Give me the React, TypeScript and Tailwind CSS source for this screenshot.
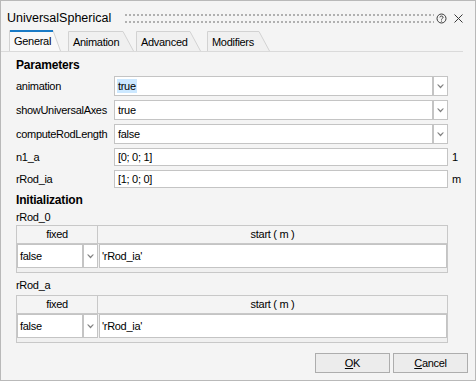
import React from 'react';

const Chevron = () => (
  <svg width="7" height="5" viewBox="0 0 7 5">
    <path d="M0 0.5 L3.5 4.5 L7 0.5 L5.5 0.5 L3.5 2.6 L1.5 0.5 Z" fill="#808080" />
  </svg>
);

interface TabProps {
  label: string;
  active?: boolean;
  width: number;
  className: string;
}

const Tab = ({ label, active, width, className }: TabProps) => {
  const h = active ? 21 : 20;
  const s = active ? 8 : 11;
  return (
    <div className={`relative ${className}`}>
      <svg className="absolute inset-0" width={width} height={h} viewBox={`0 0 ${width} ${h}`}>
        <path
          d={`M0.5 ${h} L0.5 0.5 L${width - s} 0.5 L${width - 0.5} ${h}`}
          fill={active ? '#f9f9f9' : '#f0f0f0'}
          stroke="#d2d2d2"
          strokeWidth="1"
        />
        {active && <rect x="1" y="0" width={width - s - 1} height="2" fill="#1a7bc6" />}
      </svg>
      <span className="relative block pl-[5px] pt-[4px] leading-[14px]">{label}</span>
    </div>
  );
};

const SelectRow = ({ label, value, selected }: { label: string; value: string; selected?: boolean }) => (
  <div className="flex h-[24px]">
    <div className="w-[98px] h-[20px] flex items-center">{label}</div>
    <div className="flex w-[334px] h-[20px]">
      <div className="flex-1 bg-white border border-[#c4c4c4] flex items-center pl-[2px]">
        <span className={selected ? 'bg-[#cce8ff] px-[1px] leading-[14px]' : 'px-[1px] leading-[14px]'}>{value}</span>
      </div>
      <div className="w-[15px] bg-white border border-[#c4c4c4] flex items-center justify-center">
        <Chevron />
      </div>
    </div>
  </div>
);

const TextRow = ({ label, value, unit }: { label: string; value: string; unit: string }) => (
  <div className="flex h-[22px]">
    <div className="w-[98px] h-[18px] flex items-center">{label}</div>
    <div className="w-[334px] h-[18px] bg-white border border-[#c4c4c4] flex items-center pl-[3px]">{value}</div>
    <div className="ml-[4px] h-[18px] flex items-center">{unit}</div>
  </div>
);

const InitTable = () => (
  <div className="w-[432px] border border-[#c8c8c8] bg-[#f0f0f0]">
    <div className="flex h-[18px] border-b border-[#c8c8c8] bg-[#f4f4f4]">
      <div className="w-[81px] flex items-center justify-center border-r border-[#c8c8c8]">fixed</div>
      <div className="flex-1 flex items-center justify-center">start ( m )</div>
    </div>
    <div className="flex h-[24px]">
      <div className="w-[66px] bg-white border border-[#c4c4c4] flex items-center pl-[2px]">false</div>
      <div className="w-[15px] bg-white border border-[#c4c4c4] flex items-center justify-center">
        <Chevron />
      </div>
      <div className="w-[348px] ml-[1px] bg-white border border-[#c4c4c4] flex items-center pl-[2px]">'rRod_ia'</div>
    </div>
    <div className="h-[4px]" />
  </div>
);

export default function App() {
  return (
    <div className="w-[476px] h-[381px] border border-[#b9b9b9] bg-[#f4f4f4] flex flex-col overflow-hidden text-black font-['Liberation_Sans',Arial,sans-serif]">
      {/* title bar */}
      <div className="h-[30px] pt-[4px] flex items-center pl-[6px] pr-[12px]">
        <span className="text-[12.5px] leading-none">UniversalSpherical</span>
        <svg className="ml-[14px]" width="309" height="10">
          <defs>
            <pattern id="grip" width="4" height="10" patternUnits="userSpaceOnUse">
              <rect x="0" y="1" width="2" height="2" fill="#b0b0b0" />
              <rect x="0" y="8" width="2" height="2" fill="#b0b0b0" />
            </pattern>
          </defs>
          <rect width="309" height="10" fill="url(#grip)" />
        </svg>
        <svg className="ml-[2px]" width="11" height="11" viewBox="0 0 11 11">
          <circle cx="5.5" cy="5.5" r="4.5" fill="none" stroke="#3a3a3a" strokeWidth="1" />
          <path d="M3.9 4.3 C3.9 2.6 7.1 2.6 7.1 4.3 C7.1 5.4 5.5 5.4 5.5 6.6" fill="none" stroke="#3a3a3a" strokeWidth="1" />
          <rect x="5" y="7.6" width="1" height="1" fill="#3a3a3a" />
        </svg>
        <svg className="ml-[7px]" width="9" height="9" viewBox="0 0 9 9">
          <path d="M0.5 0.5 L8.5 8.5 M8.5 0.5 L0.5 8.5" stroke="#3a3a3a" strokeWidth="1" />
        </svg>
      </div>

      {/* tabs */}
      <div className="flex items-end h-[21px] w-[462px] border-b border-[#dadada] text-[11px] tracking-[-0.3px]">
        <Tab label="General" active width={52} className="ml-[8px] w-[52px] h-[21px]" />
        <Tab label="Animation" width={66} className="ml-[7px] w-[66px] h-[20px]" />
        <Tab label="Advanced" width={65} className="ml-[2px] w-[65px] h-[20px]" />
        <Tab label="Modifiers" width={63} className="ml-[6px] w-[63px] h-[20px]" />
      </div>

      {/* content */}
      <div className="pl-[15px] flex flex-col text-[11px] tracking-[-0.3px]">
        <div className="mt-[5px] h-[16px] leading-[16px] font-bold text-[12px] tracking-[-0.2px]">Parameters</div>
        <div className="mt-[3px]">
          <SelectRow label="animation" value="true" selected />
          <SelectRow label="showUniversalAxes" value="true" />
          <SelectRow label="computeRodLength" value="false" />
          <TextRow label="n1_a" value="[0; 0; 1]" unit="1" />
          <TextRow label="rRod_ia" value="[1; 0; 0]" unit="m" />
        </div>
        <div className="h-[16px] leading-[16px] font-bold text-[12px] tracking-[-0.2px]">Initialization</div>
        <div className="mt-[1px] h-[16px] leading-[16px]">rRod_0</div>
        <InitTable />
        <div className="mt-[4px] h-[16px] leading-[16px]">rRod_a</div>
        <div className="mt-[2px]">
          <InitTable />
        </div>
      </div>

      {/* footer */}
      <div className="mt-auto mb-[7px] mr-[7px] flex justify-end text-[11px] tracking-[-0.3px]">
        <button className="w-[75px] h-[20px] border border-[#adadad] bg-[#ececec] flex items-center justify-center">
          <span><span className="underline">O</span>K</span>
        </button>
        <button className="ml-[3px] w-[75px] h-[20px] border border-[#adadad] bg-[#ececec] flex items-center justify-center">
          <span><span className="underline">C</span>ancel</span>
        </button>
      </div>
    </div>
  );
}
